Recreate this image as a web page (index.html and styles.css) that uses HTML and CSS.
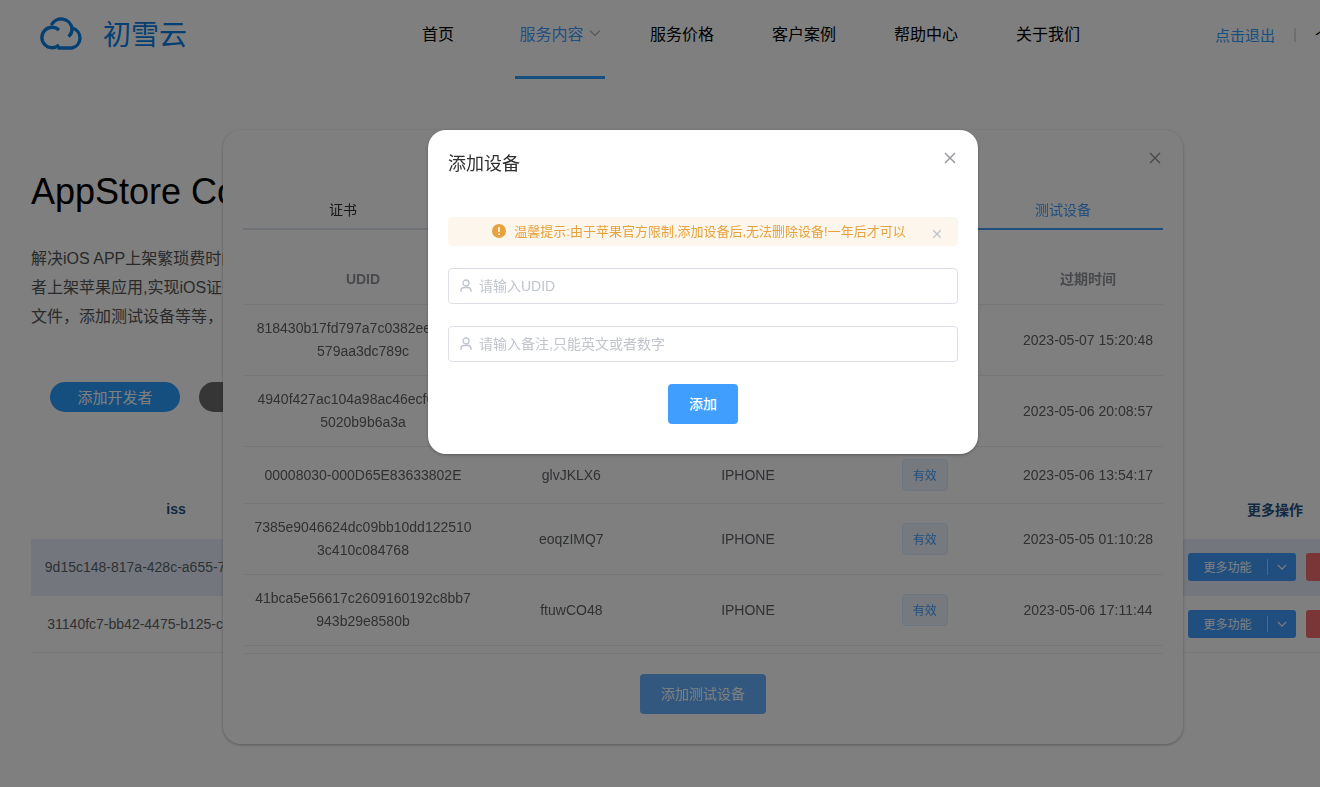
FILE: index.html
```html
<!DOCTYPE html>
<html lang="zh-CN">
<head>
<meta charset="utf-8">
<title>初雪云</title>
<link rel="stylesheet" href="styles.css">
</head>
<body>
<svg class="sprite" aria-hidden="true">
  <symbol id="close" viewBox="0 0 16 16"><path d="M3 3l10 10M13 3L3 13"/></symbol>
  <symbol id="down" viewBox="0 0 12 12"><path d="M1 3.500l5 5 5-5"/></symbol>
  <symbol id="user" viewBox="0 0 14 14"><circle cx="7" cy="4" r="3"/><path d="M2 13v-1.500c0-2 1.400-3 3.200-3h3.600c1.800 0 3.200 1 3.200 3V13"/></symbol>
</svg>

<div class="page">
  <header class="header">
    <a class="brand" href="#">
      <svg class="brand-mark" viewBox="0 0 43 34" aria-hidden="true">
        <path d="M19 14A10.200 10.200 0 1 0 19 29"/>
        <path d="M11.300 9A11 11 0 0 1 32 12.500C32.200 15.500 31 18.300 28.500 20.500"/>
        <path d="M32.500 12.200A10.200 10.200 0 0 1 32 32H17.500"/>
      </svg>
      <span class="brand-name">初雪云</span>
    </a>
    <nav class="nav">
      <a class="nav-link" href="#">首页</a>
      <a class="nav-link active" href="#">服务内容<svg class="nav-arrow"><use href="#down"/></svg></a>
      <a class="nav-link" href="#">服务价格</a>
      <a class="nav-link" href="#">客户案例</a>
      <a class="nav-link" href="#">帮助中心</a>
      <a class="nav-link" href="#">关于我们</a>
    </nav>
    <div class="account">
      <a class="logout" href="#">点击退出</a>
      <span class="account-line"></span>
      <a class="center-link" href="#">个人中心</a>
    </div>
  </header>

  <main class="main">
    <h1 class="title">AppStore Connect</h1>
    <p class="intro">解决iOS APP上架繁琐费时的问题<br>者上架苹果应用,实现iOS证书<br>文件，添加测试设备等等，</p>
    <div class="actions">
      <button class="pill" type="button">添加开发者</button>
      <button class="pill pill-dark" type="button" aria-label="更多"></button>
    </div>

    <table class="accounts">
      <thead>
        <tr><th class="col-iss">iss</th><th></th><th class="col-ops">更多操作</th></tr>
      </thead>
      <tbody>
        <tr class="current">
          <td>9d15c148-817a-428c-a655-7e02bfd85a16</td><td></td>
          <td><div class="ops">
            <div class="split"><button type="button" class="split-main">更多功能</button><button type="button" class="split-caret" aria-label="展开"><svg><use href="#down"/></svg></button></div>
            <button type="button" class="remove" aria-label="删除"></button>
          </div></td>
        </tr>
        <tr>
          <td>31140fc7-bb42-4475-b125-c60e27d1fa93</td><td></td>
          <td><div class="ops">
            <div class="split"><button type="button" class="split-main">更多功能</button><button type="button" class="split-caret" aria-label="展开"><svg><use href="#down"/></svg></button></div>
            <button type="button" class="remove" aria-label="删除"></button>
          </div></td>
        </tr>
      </tbody>
    </table>
  </main>
</div>

<div class="layer">
  <section class="dialog dialog-list" role="dialog" aria-label="测试设备">
    <button class="close" type="button" aria-label="关闭"><svg><use href="#close"/></svg></button>
    <div class="tabs" role="tablist">
      <button class="tab" type="button" role="tab">证书</button>
      <button class="tab" type="button" role="tab">标识符</button>
      <button class="tab" type="button" role="tab">描述文件</button>
      <button class="tab selected" type="button" role="tab" aria-selected="true">测试设备</button>
    </div>
    <div class="devices-wrap">
      <table class="devices">
        <thead>
          <tr><th class="col-udid">UDID</th><th>备注</th><th>类型</th><th>状态</th><th class="col-date">过期时间</th></tr>
        </thead>
        <tbody>
          <tr><td>818430b17fd797a7c0382ee01a4c<br>579aa3dc789c</td><td>kqwTRB25</td><td>IPHONE</td><td><span class="tag">有效</span></td><td>2023-05-07 15:20:48</td></tr>
          <tr><td>4940f427ac104a98ac46ecf61fac7<br>5020b9b6a3a</td><td>mhsDPW31</td><td>IPHONE</td><td><span class="tag">有效</span></td><td>2023-05-06 20:08:57</td></tr>
          <tr><td>00008030-000D65E83633802E</td><td>glvJKLX6</td><td>IPHONE</td><td><span class="tag">有效</span></td><td>2023-05-06 13:54:17</td></tr>
          <tr><td>7385e9046624dc09bb10dd122510<br>3c410c084768</td><td>eoqzIMQ7</td><td>IPHONE</td><td><span class="tag">有效</span></td><td>2023-05-05 01:10:28</td></tr>
          <tr><td>41bca5e56617c2609160192c8bb7<br>943b29e8580b</td><td>ftuwCO48</td><td>IPHONE</td><td><span class="tag">有效</span></td><td>2023-05-06 17:11:44</td></tr>
        </tbody>
      </table>
    </div>
    <button class="button button-light" type="button">添加测试设备</button>
  </section>
</div>

<div class="layer mask">
  <section class="dialog dialog-form" role="dialog" aria-labelledby="form-title">
    <button class="close" type="button" aria-label="关闭"><svg><use href="#close"/></svg></button>
    <h2 class="dialog-title" id="form-title">添加设备</h2>
    <form class="form">
      <div class="alert" role="alert">
        <svg class="alert-icon" viewBox="0 0 14 14" aria-hidden="true"><circle cx="7" cy="7" r="7"/><path d="M7 3v5M7 9.500v1.500"/></svg>
        <span>温馨提示:由于苹果官方限制,添加设备后,无法删除设备!一年后才可以</span>
        <button class="alert-close" type="button" aria-label="关闭提示"><svg><use href="#close"/></svg></button>
      </div>
      <label class="field"><svg><use href="#user"/></svg><input type="text" placeholder="请输入UDID" aria-label="UDID"></label>
      <label class="field"><svg><use href="#user"/></svg><input type="text" placeholder="请输入备注,只能英文或者数字" aria-label="备注"></label>
      <button class="button" type="button">添加</button>
    </form>
  </section>
</div>
</body>
</html>
```
FILE: styles.css
```css
* { box-sizing: border-box; }

html { overflow: hidden; }

body {
  margin: 0;
  background: #fff;
  color: #606266;
  font-family: "Liberation Sans", "Noto Sans CJK SC", sans-serif;
  font-size: 14px;
}

a { color: inherit; text-decoration: none; }

button {
  margin: 0;
  padding: 0;
  border: 0;
  background: none;
  color: inherit;
  font: inherit;
  cursor: pointer;
}

svg { fill: none; stroke: currentColor; }

.sprite { display: none; }

/* Page */
.page { min-width: 1406px; }

.header { display: flex; height: 80px; }

.brand {
  display: flex;
  align-items: center;
  gap: 20px;
  flex: none;
  width: 377px;
  height: 66px;
  padding-left: 40px;
  color: #0a80e6;
}

.brand-mark { width: 43px; height: 34px; stroke-width: 3.4; }

.brand-name {
  font-family: "Noto Sans CJK SC", sans-serif;
  font-size: 28px;
  font-weight: 400;
  line-height: 32px;
}

.nav { display: flex; gap: 32px; padding-left: 16px; }

.nav-link {
  display: flex;
  align-items: center;
  justify-content: center;
  gap: 5px;
  width: 90px;
  height: 79px;
  padding-bottom: 10px;
  border-bottom: 3px solid transparent;
  color: #000;
  font-size: 16px;
}

.nav-link.active { border-color: #2a9eff; color: #409eff; }

.nav-arrow { width: 12px; height: 12px; color: #b4b6ba; stroke-width: 1.4; }

.account {
  display: flex;
  align-items: center;
  gap: 19px;
  height: 69px;
  margin-left: auto;
  padding-right: 31px;
  font-size: 15px;
}

.logout { color: #2a9eff; }
.account-line { width: 2px; height: 14px; background: #dcdcdc; }
.center-link { color: #000; }

.main { padding: 91px 31px 0; }

.title {
  margin: 0;
  color: #000;
  font-size: 36px;
  font-weight: 400;
  line-height: 42px;
}

.intro { margin: 31px 0 0; font-size: 16px; line-height: 29px; color: #555; }

.actions { display: flex; gap: 19px; margin-top: 51px; padding-left: 19px; }

.pill {
  width: 130px;
  height: 30px;
  padding-bottom: 2px;
  border-radius: 15px;
  background: #2a9eff;
  color: #fff;
  font-size: 15px;
}

.pill-dark { background: #6a6c6b; }

table { width: 100%; border-collapse: separate; border-spacing: 0; table-layout: fixed; text-align: center; }

.accounts { margin-top: 67px; }
.accounts th { height: 60px; padding: 0; color: #245286; }
.accounts td { height: 57px; padding: 0; border-bottom: 1px solid #ebeef5; }
.accounts .current td { background: #e6effb; }
.col-iss { width: 290px; }
.col-ops { width: 200px; }

.ops { display: flex; justify-content: center; gap: 10px; font-size: 12px; color: #fff; }

.split { display: flex; align-items: center; height: 28px; border-radius: 3px; background: #409eff; }
.split-main { width: 79px; height: 28px; padding-bottom: 2px; }
.split-caret { display: flex; align-items: center; justify-content: center; width: 29px; height: 16px; border-left: 1px solid #a0cfff; }
.split-caret svg { width: 10px; height: 10px; stroke-width: 1.4; }

.remove { width: 56px; height: 28px; border-radius: 3px; background: #f56c6c; }

/* Dialogs */
.layer { position: fixed; inset: 0; min-width: 1406px; padding-top: 130px; }
.mask { background: rgba(0, 0, 0, 0.5); }

.dialog {
  position: relative;
  margin: 0 auto;
  padding: 20px 20px 30px;
  border-radius: 18px;
  background: #fff;
  box-shadow: 0 1px 3px rgba(0, 0, 0, 0.3);
}

.dialog-list { width: 960px; }
.dialog-form { width: 550px; }

.close { position: absolute; top: 20px; right: 20px; width: 16px; height: 16px; color: #909399; }
.close svg { display: block; width: 16px; height: 16px; stroke-width: 1.4; }

.dialog-title { margin: 0; padding-top: 2px; color: #303133; font-size: 18px; font-weight: 400; line-height: 24px; }

.tabs { display: grid; grid-template-columns: 200px 1fr 1fr 200px; margin-top: 40px; }
.tab { height: 40px; border-bottom: 2px solid #dfe4ed; color: #303133; }
.tab.selected { border-color: #409eff; color: #409eff; }

.devices-wrap { margin-top: 27px; padding-bottom: 7px; border-bottom: 1px solid #ebeef5; }
.devices th, .devices td { padding: 12px 0; border-bottom: 1px solid #ebeef5; line-height: 23px; }
.devices th { padding: 11px 0 13px; color: #909399; }
.col-udid { width: 240px; }
.col-date { width: 150px; }

.tag {
  display: block;
  width: 46px;
  height: 32px;
  margin: 0 auto;
  border: 1px solid #d9ecff;
  border-radius: 4px;
  background: #ecf5ff;
  color: #409eff;
  font-size: 12px;
  line-height: 32px;
}

.button {
  display: block;
  height: 40px;
  margin: 0 auto;
  padding: 0 21px 2px;
  border-radius: 4px;
  background: #409eff;
  color: #fff;
  font-weight: 500;
}

.button-light { margin-top: 20px; background: #66b1ff; font-weight: 400; }

/* Form */
.form { display: grid; gap: 22px; margin-top: 41px; }

.alert {
  position: relative;
  display: flex;
  align-items: center;
  justify-content: center;
  gap: 8px;
  height: 29px;
  padding: 0 8px 2px 0;
  border-radius: 4px;
  background: #fdf6ec;
  color: #e6a23c;
  font-size: 13px;
}

.alert-icon { width: 14px; height: 14px; }
.alert-icon circle { fill: currentColor; stroke: none; }
.alert-icon path { stroke: #fff; stroke-width: 1.5; }

.alert-close { position: absolute; top: 11px; right: 15px; width: 12px; height: 12px; color: #c0c4cc; }
.alert-close svg { display: block; width: 12px; height: 12px; stroke-width: 1.8; }

.field {
  display: flex;
  align-items: center;
  gap: 6px;
  height: 36px;
  padding: 0 10px;
  border: 1px solid #dcdfe6;
  border-radius: 4px;
  color: #c0c4cc;
}

.field svg { width: 14px; height: 14px; stroke-width: 1.3; }

.field input {
  flex: 1;
  min-width: 0;
  padding: 0;
  border: 0;
  outline: 0;
  background: none;
  color: #606266;
  font: inherit;
}

.field input::placeholder { color: #c0c4cc; }
```
